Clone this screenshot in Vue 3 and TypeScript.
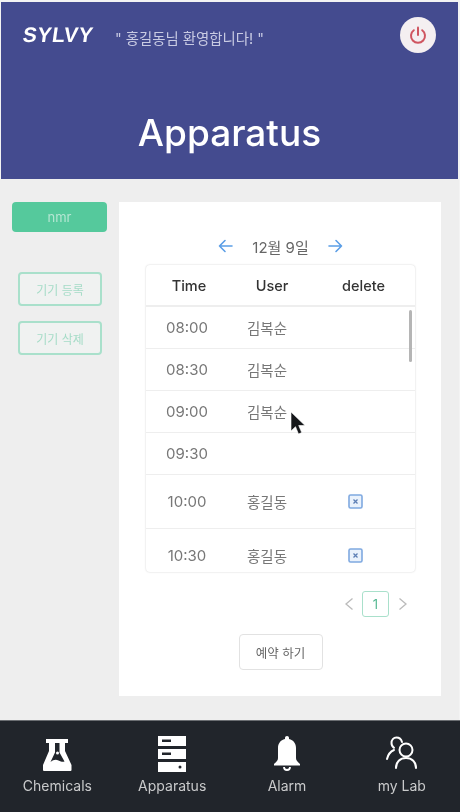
<script setup lang="ts">
interface Slot { time: string; user: string; mine: boolean; tall: boolean }
const slots: Slot[] = [
  { time: '08:00', user: '김복순', mine: false, tall: false },
  { time: '08:30', user: '김복순', mine: false, tall: false },
  { time: '09:00', user: '김복순', mine: false, tall: false },
  { time: '09:30', user: '', mine: false, tall: false },
  { time: '10:00', user: '홍길동', mine: true, tall: true },
  { time: '10:30', user: '홍길동', mine: true, tall: true },
]
</script>

<template>
  <div class="page">
    <header class="header">
      <div class="topbar">
        <span class="logo">SYLVY</span>
        <span class="welcome">" 홍길동님 환영합니다! "</span>
        <button class="power" aria-label="logout">
          <svg width="22" height="22" viewBox="0 0 22 22" fill="none" stroke="#cf5560" stroke-width="2" stroke-linecap="round">
            <path d="M11 3.500v7.500" />
            <path d="M6.800 6.200a7 7 0 1 0 8.400 0" />
          </svg>
        </button>
      </div>
      <h1 class="title">Apparatus</h1>
    </header>

    <main class="content">
      <aside class="side">
        <button class="device">nmr</button>
        <div class="side-actions">
          <button class="outline">기기 등록</button>
          <button class="outline">기기 삭제</button>
        </div>
      </aside>

      <section class="card">
        <div class="date-nav">
          <svg width="15" height="14" viewBox="0 0 15 14" fill="none" stroke="#5b9ee6" stroke-width="1.600" stroke-linecap="round" stroke-linejoin="round">
            <path d="M14 7H1.500M7 1.500 1.500 7 7 12.500" />
          </svg>
          <span class="date">12월 9일</span>
          <svg width="15" height="14" viewBox="0 0 15 14" fill="none" stroke="#5b9ee6" stroke-width="1.600" stroke-linecap="round" stroke-linejoin="round">
            <path d="M1 7h12.500M8 1.500 13.500 7 8 12.500" />
          </svg>
        </div>

        <div class="table">
          <div class="row head">
            <span class="c-time">Time</span>
            <span class="c-user">User</span>
            <span class="c-del">delete</span>
          </div>
          <div class="tbody">
            <div v-for="s in slots" :key="s.time" class="row" :class="{ tall: s.tall }">
              <span class="c-time">{{ s.time }}</span>
              <span class="c-user name">{{ s.user }}</span>
              <span class="c-del">
                <svg v-if="s.mine" width="15" height="15" viewBox="0 0 15 15">
                  <rect x="1" y="1" width="13" height="13" rx="1.500" fill="#eaf2fc" stroke="#7fa9e0" stroke-width="1.600" />
                  <path d="M5.500 5.500l4 4M9.500 5.500l-4 4" stroke="#5d7fb5" stroke-width="1.300" />
                </svg>
              </span>
            </div>
            <span class="scrollbar"></span>
          </div>
          <svg class="cursor" width="18" height="26" viewBox="0 0 18 26">
            <path d="M2 1v19l4.500-4.300 3 7.300 3.200-1.400-3-7.100H16z" fill="#15171a" stroke="#fff" stroke-width="0.600" />
          </svg>
        </div>

        <div class="pager">
          <svg width="10" height="14" viewBox="0 0 10 14" fill="none" stroke="#bbb" stroke-width="1.300"><path d="M8.500 1.500 2 7l6.500 5.500" /></svg>
          <span class="page-num">1</span>
          <svg width="10" height="14" viewBox="0 0 10 14" fill="none" stroke="#bbb" stroke-width="1.300"><path d="M1.500 1.500 8 7l-6.500 5.500" /></svg>
        </div>

        <button class="reserve">예약 하기</button>
      </section>
    </main>

    <nav class="tabs">
      <div class="tab">
        <svg width="30" height="34" viewBox="0 0 30 34">
          <path fill="#fff" fill-rule="evenodd" d="M4 1h22v4h-3v8l6.500 14v5a1 1 0 0 1-1 1H2a1 1 0 0 1-1-1v-5L7 13V5H4zm9 4v9.500L8.500 24c3-2.500 5.500-2.800 8-1.500s4.500 1.600 6 1L17.500 14.500V5z" />
          <circle cx="15.500" cy="15" r="1.500" fill="#fff" />
        </svg>
        <span>Chemicals</span>
      </div>
      <div class="tab">
        <svg width="30" height="36" viewBox="0 0 30 36">
          <path fill="#fff" fill-rule="evenodd" d="M1 0h28v10H1zm4 3.500v2.500h9V3.500zM1 13h28v10H1zm4 3.500v2.500h9v-2.500zM1 26h28v10H1zm22 3.500a1.500 1.500 0 1 0 0 3 1.500 1.500 0 0 0 0-3z" />
        </svg>
        <span>Apparatus</span>
      </div>
      <div class="tab">
        <svg width="28" height="36" viewBox="0 0 28 36">
          <path fill="#fff" d="M14 0c1.200 0 2 .8 2 2v1c4.500 1 7 4.500 7 9v10c0 2 1 3.500 4 6v1.500H1V28c3-2.500 4-4 4-6V12c0-4.500 2.500-8 7-9V2c0-1.200.8-2 2-2z" />
          <path fill="none" stroke="#fff" stroke-width="1.800" d="M11 31a3 3 0 0 0 6 0" />
        </svg>
        <span>Alarm</span>
      </div>
      <div class="tab">
        <svg width="34" height="36" viewBox="0 0 34 36" fill="none" stroke="#fff" stroke-width="2" stroke-linecap="round">
          <circle cx="21" cy="14" r="6.500" />
          <path d="M11 32c0-6 4-10 10-10s10 4 10 10" />
          <path d="M17 6c-.8-3-3-4.500-5.500-4.500C8.500 1.500 6.500 4 6.500 7c0 2 1 3.800 2.500 4.800M9 14c-3.500 1.500-6 4.500-7 9" />
        </svg>
        <span>my Lab</span>
      </div>
    </nav>
  </div>
</template>

<style>
html, body { margin: 0; background: #f3f3f3; }
</style>

<style scoped>
.page {
  width: 460px;
  height: 812px;
  box-sizing: border-box;
  padding-top: 2px;
  display: flex;
  flex-direction: column;
  font-family: Inter, "Noto Sans CJK KR", sans-serif;
  background: #f3f3f3;
  overflow: hidden;
  filter: blur(0.5px);
}
button { font-family: inherit; cursor: pointer; }

.header {
  height: 177px;
  margin: 0 2px 0 1px;
  background: #444b8f;
  flex: none;
}
.topbar {
  display: flex;
  align-items: center;
  height: 66px;
  padding: 0 22px;
}
.logo {
  display: inline-block;
  font-family: "Liberation Sans", sans-serif;
  font-weight: 700;
  font-size: 21px;
  letter-spacing: 0.6px;
  color: #fff;
  width: 92px;
  transform: skewX(-8deg);
}
.welcome { font-size: 14.400px; color: #c9cbe3; flex: 1; padding-top: 4px; }
.power {
  width: 36px;
  height: 36px;
  padding: 0;
  border: 0;
  border-radius: 50%;
  background: #f4eff1;
  display: flex;
  align-items: center;
  justify-content: center;
}
.title {
  margin: 39px 0 0;
  text-align: center;
  font-size: 37px;
  line-height: 52px;
  font-weight: 500;
  color: #fff;
}

.content {
  flex: 1;
  min-height: 0;
  display: flex;
  align-items: flex-start;
  background: #eeeeee;
  margin-right: 1px;
  padding: 23px 18px 0 12px;
}
.side { width: 95px; margin-right: 12px; flex: none; }
.device {
  display: block;
  width: 95px;
  height: 30px;
  border: 0;
  border-radius: 4px;
  background: #55c99c;
  color: #b5e6d3;
  font-size: 13px;
}
.side-actions {
  margin: 40px 0 0 6px;
  display: flex;
  flex-direction: column;
  gap: 15px;
}
.outline {
  width: 84px;
  height: 34px;
  padding: 0;
  border: 2px solid #a9e0cb;
  border-radius: 4px;
  background: #f0f2f1;
  color: #a5dcc7;
  font-size: 12px;
}

.card {
  width: 322px;
  height: 494px;
  box-sizing: border-box;
  background: #fff;
  flex: none;
  padding: 34px 26px 0 27px;
  display: flex;
  flex-direction: column;
}
.date-nav {
  height: 20px;
  display: flex;
  align-items: center;
  justify-content: center;
  gap: 19px;
  font-size: 15px;
}
.date { color: #666; }

.table {
  position: relative;
  width: 269px;
  height: 307px;
  margin-top: 9px;
  border-radius: 4px;
  box-shadow: 0 0 2px rgba(0, 0, 0, 0.2);
  flex: none;
}
.tbody {
  position: relative;
  height: 265px;
  overflow: hidden;
}
.row {
  display: flex;
  align-items: center;
  height: 42px;
  box-sizing: border-box;
  border-bottom: 1.500px solid #eeeeee;
  font-size: 15px;
  color: #777;
}
.row.tall { height: 54px; }
.head {
  color: #333;
  font-size: 14.500px;
  font-weight: 500;
  text-align: center;
  border-bottom-width: 2px;
}
.c-time { width: 82px; text-align: center; }
.c-user { width: 86px; text-align: center; }
.c-del { flex: 1; text-align: center; display: flex; justify-content: center; }
.head .c-time { width: 86px; }
.head .c-user { width: 80px; }
.name { width: 78px; color: #777; font-size: 14.500px; }
.tbody .c-del { padding-right: 10px; }
.scrollbar {
  position: absolute;
  right: 3px;
  top: 3px;
  width: 3px;
  height: 52px;
  border-radius: 2px;
  background: #b5b5b5;
}
.cursor { position: absolute; left: 143px; top: 146px; }

.pager {
  display: flex;
  align-items: center;
  justify-content: flex-end;
  gap: 8px;
  height: 28px;
  margin-top: 18px;
  padding-right: 7px;
}
.page-num {
  width: 27px;
  height: 26px;
  margin-right: 1px;
  box-sizing: border-box;
  border: 1.500px solid #a9e0cb;
  border-radius: 3px;
  color: #55b892;
  font-size: 13px;
  display: flex;
  align-items: center;
  justify-content: center;
}
.reserve {
  align-self: center;
  width: 84px;
  height: 36px;
  margin-top: 16px;
  padding: 0;
  border: 1.500px solid #e2e2e2;
  border-radius: 4px;
  background: #fff;
  color: #666;
  font-size: 12.500px;
}

.tabs {
  height: 92px;
  flex: none;
  background: #21252b;
  border-top: 1px solid #6b6e72;
  box-sizing: border-box;
  display: flex;
  padding: 15px 0 0;
}
.tab {
  width: 114.800px;
  height: 58px;
  display: flex;
  flex-direction: column;
  align-items: center;
  justify-content: flex-end;
  color: #c9cacb;
  font-size: 14px;
  line-height: 17px;
  gap: 5px;
}
.tab svg { flex: none; }
</style>
